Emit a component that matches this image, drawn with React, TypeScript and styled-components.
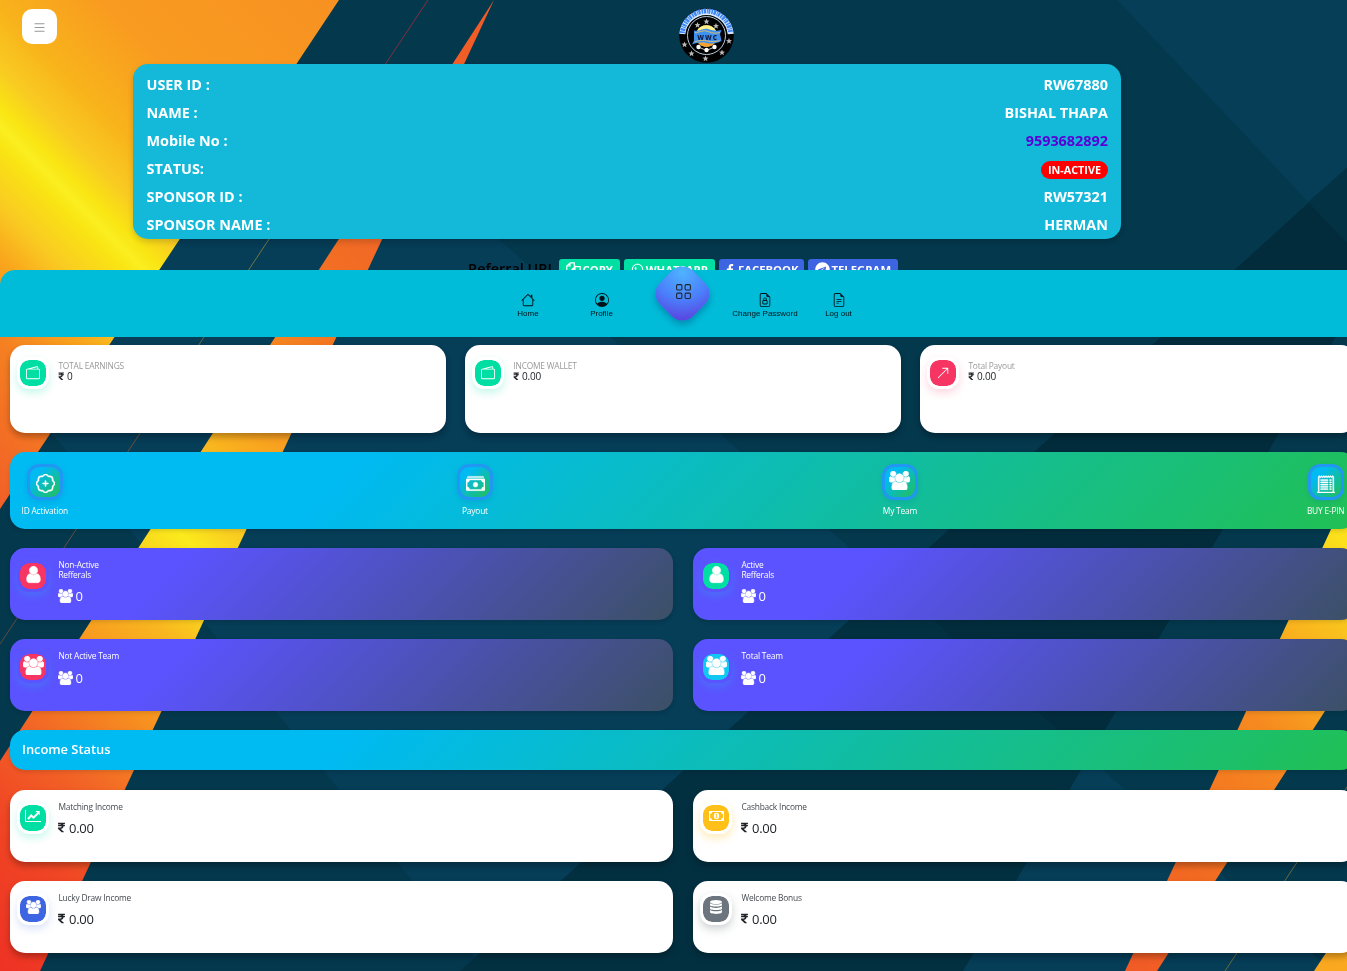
import React from "react";
import styled, { createGlobalStyle, css } from "styled-components";
import { BsList, BsPersonCircle, BsGrid, BsFileEarmarkLock, BsFileEarmarkText, BsWallet2, BsArrowUpRight, BsPatchPlus, BsReceiptCutoff } from "react-icons/bs";
import { FaWhatsapp, FaFacebookF, FaTelegram, FaRupeeSign } from "react-icons/fa";

const GlobalStyle = createGlobalStyle`
  * { box-sizing: border-box; }
  html { background: #04384d; }
  html, body { margin: 0; padding: 0; overflow: hidden; }
  body { font-family: "Open Sans", "Noto Sans", sans-serif; color: #212529; }
`;

/* ---------- drawings ---------- */

type IconProps = { size?: number; height?: number };

const UserIcon = ({ size = 16 }: IconProps) => (
  <svg width={size} height={size} viewBox="0 0 1792 1792" fill="currentColor" stroke="currentColor" strokeWidth="60">
    <path d="M1536 1399q0 109-62.5 187t-150.5 78h-854q-88 0-150.5-78t-62.5-187q0-85 8.5-160.5t31.5-152 58.5-131 94-89 134.5-34.5q131 128 313 128t313-128q76 0 134.5 34.5t94 89 58.5 131 31.5 152 8.5 160.5zm-256-887q0 159-112.5 271.5t-271.5 112.5-271.5-112.5-112.5-271.5 112.5-271.5 271.5-112.5 271.5 112.5 112.5 271.5z" />
  </svg>
);

const UsersIcon = ({ size = 15 }: IconProps) => (
  <svg width={size} height={(size * 1792) / 1920} viewBox="64 0 1920 1792" fill="currentColor" stroke="currentColor" strokeWidth="50">
    <path d="M657 896q-162 5-265 128h-134q-82 0-138-40.5t-56-118.5q0-353 124-353 6 0 43.5 21t97.5 42.5 119 21.5q67 0 133-23-5 37-5 66 0 159 81 256zm1071 637q0 120-73 189.5t-194 69.5h-874q-121 0-194-69.5t-73-189.5q0-53 3.5-103.5t14-109 26.5-108.5 43-97.5 62-81 85.5-53.5 111.5-20q10 0 43 21.5t73 48 107 48 135 21.5 135-21.5 107-48 73-48 43-21.5q61 0 111.5 20t85.5 53.5 62 81 43 97.5 26.5 108.5 14 109 3.5 103.5zm-1024-1277q0 106-75 181t-181 75-181-75-75-181 75-181 181-75 181 75 75 181zm704 384q0 159-112.5 271.5t-271.5 112.5-271.5-112.5-112.5-271.5 112.5-271.5 271.5-112.5 271.5 112.5 112.5 271.5zm576 225q0 78-56 118.5t-138 40.5h-134q-103-123-265-128 81-97 81-256 0-29-5-66 66 23 133 23 59 0 119-21.5t97.5-42.5 43.5-21q124 0 124 353zm-128-609q0 106-75 181t-181 75-181-75-75-181 75-181 181-75 181 75 75 181z" />
  </svg>
);

const HomeIcon = () => (
  <svg width="14" height="14" viewBox="0 0 16 16" fill="currentColor">
    <path d="M2 13.5V7h1v6.5a.5.5 0 0 0 .5.5h9a.5.5 0 0 0 .5-.5V7h1v6.5a1.5 1.5 0 0 1-1.5 1.5h-9A1.5 1.5 0 0 1 2 13.5zm11-11V6l-2-2V2.5a.5.5 0 0 1 .5-.5h1a.5.5 0 0 1 .5.5z" />
    <path d="M7.293 1.5a1 1 0 0 1 1.414 0l6.647 6.646a.5.5 0 0 1-.708.708L8 2.207 1.354 8.854a.5.5 0 1 1-.708-.708L7.293 1.5z" />
  </svg>
);

const CashIcon = () => (
  <svg width="19" height="19" viewBox="0 0 16 16" fill="currentColor" stroke="currentColor" strokeWidth=".35">
    <path d="M14 3H1a1 1 0 0 1 1-1h12a1 1 0 0 1 1 1h-1z" />
    <path fillRule="evenodd" d="M15 5H1v8h14V5zM1 4a1 1 0 0 0-1 1v8a1 1 0 0 0 1 1h14a1 1 0 0 0 1-1V5a1 1 0 0 0-1-1H1z" />
    <path d="M13 5a2 2 0 0 0 2 2V5h-2zM3 5a2 2 0 0 1-2 2V5h2zm10 8a2 2 0 0 1 2-2v2h-2zM3 13a2 2 0 0 0-2-2v2h2zm7-4a2 2 0 1 1-4 0 2 2 0 0 1 4 0z" />
  </svg>
);

const CopyIcon = () => (
  <svg width="15" height="15" viewBox="0 0 15 15" fill="none" stroke="currentColor" strokeWidth="1.2">
    <path d="M4 .8h4.3v3.8M4 .8.8 4v6.6h4.8M4 .8V4H.8M9 4.6h5.2v9.6H5.8V7.8L9 4.6v3.2H5.8" />
  </svg>
);

const ChartIcon = () => (
  <svg width="16" height="12" viewBox="0 0 16 12" fill="none" stroke="currentColor">
    <path d="M.5 0v11.5H16" strokeWidth="1" />
    <path d="M3 9l3.2-3.5 2.3 2.2L13 3.2" strokeWidth="2" />
    <path d="M10.5 1h4.2v4.2z" fill="currentColor" stroke="none" />
  </svg>
);

const MoneyIcon = () => (
  <svg width="15" height="10" viewBox="0 0 15 10" fill="currentColor">
    <path fillRule="evenodd" d="M0 0h15v10H0zM3 1.1A2 2 0 0 1 1.1 3v4A2 2 0 0 1 3 8.9h9A2 2 0 0 1 13.9 7V3A2 2 0 0 1 12 1.1z" />
    <ellipse cx="7.5" cy="5" rx="2.7" ry="3.3" />
    <path d="M6.5 3.600l1-.7v3.600M6.400 6.700h2.200" fill="none" stroke="#ffc01a" strokeWidth=".8" />
  </svg>
);

const DatabaseIcon = () => (
  <svg width="12" height="14" viewBox="0 0 12 14" fill="currentColor">
    <ellipse cx="6" cy="2" rx="6" ry="2" />
    <path d="M0 3.300c2 1.700 10 1.700 12 0v1.800c0 2-12 2-12 0zM0 6.600c2 1.700 10 1.700 12 0v1.800c0 2-12 2-12 0zM0 9.900c2 1.700 10 1.700 12 0V12c0 2.500-12 2.500-12 0z" />
  </svg>
);

const stars: [number, number][] = [
  [18.5, 17], [27.5, 13.5], [37, 18], [5.5, 36.5], [12.5, 45.5], [26.5, 50.5], [43, 44.5], [50, 33],
];

const Logo = () => (
  <svg width="55" height="55" viewBox="0 0 55 55">
    <circle cx="27.500" cy="27.500" r="27.300" fill="#000" />
    <path d="M3.300 26A24.300 24.300 0 0 1 51.700 26" fill="none" stroke="#dcecff" strokeWidth="6" />
    <path d="M3.300 25A24.300 24.300 0 0 1 51.700 25" fill="none" stroke="#3c87f5" strokeWidth="5" strokeDasharray="1.6 .7 2.500 .8 1 .6 2 1" />
    <circle cx="27.500" cy="27.500" r="19" fill="#000" stroke="#bcd" strokeWidth="1" />
    <circle cx="27.500" cy="28" r="10.800" fill="#fbc45c" />
    <path d="M18 23a10.800 10.800 0 0 1 19 0z" fill="#fff08c" />
    <path d="M19 34.500a10.800 10.800 0 0 0 17 0z" fill="#f5a030" />
    {stars.map(([x, y]) => (
      <path key={`${x}-${y}`} transform={`translate(${x} ${y})`} fill="#b9b9b9" d="M0-3l.8 2.100 2.200.1-1.700 1.400.6 2.200L0 1.600l-1.900 1.200.6-2.200L-3-.8l2.200-.1z" />
    ))}
    <path d="M15 22.500c5 1.500 9-2.500 14-1.500 5 1.500 8 2.500 13.500 1l-1.500 4 1.500 7c-6 3-11 3-15 2-5-1-9-.5-14.500 1.500l2-4z" fill="#3f91ee" />
    <path d="M16 24.500c5 0 8-3 13-1s8 2 12 1M15.500 34c5-2 9-2 13-1s8 1 12-.5" stroke="#fbc45c" strokeWidth=".8" fill="none" />
    <text x="28.500" y="31.500" textAnchor="middle" fontFamily="Open Sans, sans-serif" fontWeight="800" fontSize="6.500" letterSpacing="1" fill="#111d46">WWC</text>
    <path d="M19.500 39L27.500 42.500 35.500 39" stroke="#fff" strokeWidth=".8" fill="none" />
    <circle cx="19.500" cy="39" r="2.200" fill="#fff" />
    <circle cx="27.500" cy="42" r="2.200" fill="#fff" />
    <circle cx="35.500" cy="39" r="2.200" fill="#fff" />
  </svg>
);

/* Diagonal colour ramps run along x - y. */
const Wallpaper = () => (
  <BackdropSvg viewBox="0 0 1347 971" preserveAspectRatio="none">
    <defs>
      <linearGradient id="bandA" gradientUnits="userSpaceOnUse" x1="-254" y1="255" x2="170" y2="-169">
        <stop offset="0" stopColor="#f15f27" />
        <stop offset=".2" stopColor="#f58021" />
        <stop offset=".3" stopColor="#f9a81c" />
        <stop offset=".36" stopColor="#f9cb22" />
        <stop offset=".43" stopColor="#f9e513" />
        <stop offset=".452" stopColor="#fbee21" />
        <stop offset=".475" stopColor="#f9e513" />
        <stop offset=".52" stopColor="#f9cb22" />
        <stop offset=".59" stopColor="#f8b31b" />
        <stop offset=".72" stopColor="#f99b20" />
        <stop offset="1" stopColor="#f79122" />
      </linearGradient>
      <linearGradient id="bandB" gradientUnits="userSpaceOnUse" x1="-480" y1="480" x2="247" y2="-247">
        <stop offset="0" stopColor="#ee3324" />
        <stop offset=".1" stopColor="#f04624" />
        <stop offset=".18" stopColor="#f26426" />
        <stop offset=".27" stopColor="#f79420" />
        <stop offset=".34" stopColor="#f9b81f" />
        <stop offset=".38" stopColor="#f9d61d" />
        <stop offset=".417" stopColor="#fbea1c" />
        <stop offset=".45" stopColor="#f9cf20" />
        <stop offset=".52" stopColor="#f9ab1e" />
        <stop offset=".58" stopColor="#f79322" />
        <stop offset=".65" stopColor="#f47621" />
        <stop offset=".76" stopColor="#f16726" />
        <stop offset="1" stopColor="#f15a27" />
      </linearGradient>
      <linearGradient id="bandC" gradientUnits="userSpaceOnUse" x1="77" y1="-77" x2="400" y2="-400">
        <stop offset="0" stopColor="#f15a26" />
        <stop offset=".25" stopColor="#f26922" />
        <stop offset=".6" stopColor="#f68b20" />
        <stop offset=".8" stopColor="#f9b51e" />
        <stop offset="1" stopColor="#fbe01b" />
      </linearGradient>
      <linearGradient id="hair" gradientUnits="userSpaceOnUse" x1="428" y1="0" x2="0" y2="644">
        <stop offset="0" stopColor="#8b2b3a" />
        <stop offset=".12" stopColor="#6d3540" />
        <stop offset=".4" stopColor="#76783a" />
        <stop offset=".65" stopColor="#6b4f40" />
        <stop offset="1" stopColor="#64483f" />
      </linearGradient>
    </defs>
    <rect width="1347" height="971" fill="#04384d" />
    <path d="M227 0L1332 971H485L0 369V0z" fill="#063d57" />
    <path d="M227 0H1117L1347 243V971H1332z" fill="#04384d" />
    <path d="M1117 0H1347V243z" fill="#063d57" />
    <path d="M1347 168V317L963 971H460L662 790z" fill="#033041" />
    <path d="M1347 168V317L1089 757 891 583z" fill="#022c3c" />
    <path d="M1308 202L1347 168V243z" fill="#023243" />
    <path d="M0 0H339L0 509z" fill="url(#bandA)" />
    <path d="M494 0L0 761V971H40z" fill="url(#bandB)" />
    <path d="M1347 495L1125 971H1157L1347 677z" fill="url(#bandC)" />
    <path d="M1347 921V971H1314z" fill="#f9a81f" />
    <path d="M428 0L0 644" stroke="url(#hair)" strokeWidth="1" />
    <path d="M1347 787L1225 971" stroke="#6c6b3c" strokeWidth="1" />
  </BackdropSvg>
);

/* ---------- layout ---------- */

const BackdropSvg = styled.svg`
  position: fixed;
  inset: 0;
  width: 100%;
  height: 100%;
  z-index: -1;
`;

const Page = styled.div`
  width: 1366px;
  height: 971px;
  overflow: hidden;
`;

const Header = styled.header`
  display: grid;
  grid-template-columns: 657px 98px;
  padding: 9px 0 0 22px;
  height: 64px;

  > svg {
    margin-top: -1px;
  }
`;

const MenuButton = styled.button`
  display: grid;
  place-items: center;
  width: 35px;
  height: 35px;
  padding: 2px 0 0;
  border: 0;
  border-radius: 10px;
  background: #fff;
  color: #999;
`;

const UserCard = styled.section`
  width: 988px;
  height: 175px;
  margin-left: 133px;
  padding: 6px 13px 0 13.5px;
  border-radius: 15px;
  background: #14b8d8;
  box-shadow: 0 3px 6px rgba(0, 0, 0, 0.16);
`;

const UserRow = styled.div`
  display: flex;
  justify-content: space-between;
  align-items: center;
  height: 28px;
  color: #fff;
  font-size: 14.4px;
  font-weight: 700;
`;

const Phone = styled.span`
  color: #5a00d6;
`;

const StatusPill = styled.span`
  margin-top: 4px;
  height: 18px;
  padding: 0 7px;
  border-radius: 9px;
  background: #f00;
  font-size: 10.8px;
  line-height: 18px;
  letter-spacing: 0;
`;

const ReferralRow = styled.div`
  display: flex;
  gap: 4px;
  height: 31px;
  padding: 20px 0 0 468px;
  overflow: hidden;
`;

const ReferralLabel = styled.span`
  width: 87px;
  color: #000;
  font-size: 14.4px;
  font-weight: 600;
  line-height: 19px;
  white-space: nowrap;
`;

const ShareButton = styled.a<{ $color: string; $width: number }>`
  display: flex;
  justify-content: center;
  align-items: center;
  gap: 1.5px;
  width: ${(p) => p.$width}px;
  height: 21px;
  border-radius: 3px;
  background: ${(p) => p.$color};
  color: #fff;
  font-size: 11.3px;
  font-weight: 700;
`;

const NavBar = styled.nav`
  display: flex;
  height: 67px;
  padding-left: 491px;
  border-radius: 15px 15px 0 0;
  background: #00bcd8;
`;

const NavItem = styled.a<{ $width: number }>`
  display: flex;
  flex-direction: column;
  align-items: center;
  gap: 1px;
  width: ${(p) => p.$width}px;
  padding-top: 23px;
  color: #001219;
  font: 8px/11px "Liberation Sans", Arial, sans-serif;
  white-space: nowrap;
`;

const CenterButton = styled.div`
  display: grid;
  place-items: center;
  width: 47px;
  height: 47px;
  margin: 0 26px 0 21px;
  border-radius: 15px;
  background: radial-gradient(circle at 18% 18%, #4fb3ff 0%, #4a80fb 50%, #5a45e0 88%, #6037d8 100%);
  box-shadow: 3px 3px 6px rgba(0, 40, 100, 0.3);
  transform: rotate(45deg);
  position: relative;

  svg {
    transform: rotate(-45deg) translate(1px, -2px);
  }
`;

const Content = styled.main`
  display: flex;
  flex-direction: column;
  width: 1366px;
  padding: 8px 10px 0;
`;

const Row = styled.div<{ $columns: number; $gap: number }>`
  display: grid;
  grid-template-columns: repeat(${(p) => p.$columns}, 1fr);
  gap: ${(p) => p.$gap}px;
  margin-bottom: 19px;
`;

const oceanGradient = "linear-gradient(135deg, #00baf2 25%, #21c054 100%)";

const Card = styled.article<{ $height: number; $violet?: boolean }>`
  display: flex;
  gap: 9.4px;
  height: ${(p) => p.$height}px;
  padding: 12px 7px 0;
  border-radius: 15px;
  background: #fff;
  box-shadow: 0 4px 6px rgba(0, 0, 0, 0.28);
  ${(p) =>
    p.$violet &&
    css`
      color: #fff;
      background: linear-gradient(135deg, #5b53ff 25%, #3c5065 100%);
      box-shadow: 0 2px 4px rgba(0, 0, 0, 0.12);
    `}
`;

const Badge = styled.div<{ $color: string; $glow: string; $edge?: string; $shift?: number }>`
  display: grid;
  place-items: center;
  width: 32px;
  height: 32px;
  padding-bottom: ${(p) => p.$shift ?? 0}px;
  border: 3px solid ${(p) => p.$edge ?? "#fff"};
  border-radius: 12px;
  background: ${(p) => p.$color};
  background-clip: padding-box;
  box-shadow: 0 4px 8px ${(p) => p.$glow};
  color: #fff;
`;

const CardText = styled.div<{ $top?: number }>`
  padding-top: ${(p) => p.$top ?? 0.4}px;
`;

const Label = styled.div<{ $tone?: string }>`
  color: ${(p) => p.$tone ?? "inherit"};
  font-size: 8.4px;
  letter-spacing: -0.2px;
  line-height: 9.6px;
  white-space: pre-line;
`;

const Amount = styled.div<{ $large?: boolean; $lift?: number }>`
  display: flex;
  align-items: center;
  gap: 2px;
  margin-top: ${(p) => (p.$large ? 7.6 : 0) - (p.$lift ?? 0)}px;
  font-size: ${(p) => (p.$large ? 13 : 10)}px;
  line-height: ${(p) => (p.$large ? 18 : 11)}px;
  letter-spacing: -0.2px;
`;

const Rupee = styled(FaRupeeSign)`
  margin: 0 0 0 -0.19em;
`;

const ActionBar = styled.section`
  display: flex;
  justify-content: space-between;
  height: 77px;
  margin-bottom: 19px;
  padding: 12px 11.5px 0 11.5px;
  border-radius: 15px;
  background: ${oceanGradient};
  box-shadow: 0 2px 4px rgba(0, 0, 0, 0.12);
`;

const Action = styled.a`
  display: flex;
  flex-direction: column;
  align-items: center;
  color: #fff;
  font-size: 8.4px;
  letter-spacing: -0.2px;
  line-height: 12px;
  white-space: nowrap;
`;

const ActionTile = styled.span<{ $lift?: boolean }>`
  display: grid;
  place-items: center;
  width: 36px;
  height: 36px;
  margin-bottom: 5px;
  padding: ${(p) => (p.$lift ? "0 0 3px" : "3px 0 0 1px")};
  border: 3px solid #2196f3;
  border-radius: 12px;
  background: linear-gradient(135deg, #00baf2 25%, #21c054 100%) padding-box;
  box-shadow: 0 2px 5px rgba(0, 80, 160, 0.15);
`;

const SectionTitle = styled.h2`
  height: 40px;
  margin: 0 0 20px;
  padding-left: 12px;
  border-radius: 15px;
  background: ${oceanGradient};
  box-shadow: 0 2px 4px rgba(0, 0, 0, 0.12);
  color: #fff;
  font-size: 13px;
  font-weight: 600;
  line-height: 39px;
  letter-spacing: -0.08px;
`;

/* ---------- data ---------- */

const MINT = "#00dfa3";
const ROSE = "#f73563";
const BLUE = "#3d64e1";
const mintGlow = "rgba(0, 223, 163, .22)";
const roseGlow = "rgba(247, 53, 99, .2)";
const violetGlow = "rgba(50, 160, 235, .35)";

const wallets = [
  { label: "TOTAL EARNINGS", value: "0", color: MINT, glow: mintGlow, icon: <BsWallet2 size={14} /> },
  { label: "INCOME WALLET", value: "0.00", color: MINT, glow: mintGlow, icon: <BsWallet2 size={14} /> },
  { label: "Total Payout", value: "0.00", color: ROSE, glow: roseGlow, icon: <BsArrowUpRight size={14} /> },
];

const teams = [
  [
    { label: "Non-Active\nRefferals", color: ROSE, icon: <UserIcon size={19} /> },
    { label: "Active\nRefferals", color: MINT, icon: <UserIcon size={19} /> },
  ],
  [
    { label: "Not Active Team", color: ROSE, icon: <UsersIcon size={21} /> },
    { label: "Total Team", color: "#12c8f2", icon: <UsersIcon size={21} /> },
  ],
];

const incomes = [
  [
    { label: "Matching Income", color: MINT, glow: mintGlow, icon: <ChartIcon /> },
    { label: "Cashback Income", color: "#ffc01a", glow: "rgba(255, 192, 26, .3)", icon: <MoneyIcon /> },
  ],
  [
    { label: "Lucky Draw Income", color: BLUE, glow: "rgba(61, 100, 225, .18)", icon: <UsersIcon size={15} /> },
    { label: "Welcome Bonus", color: "#6c757d", glow: "rgba(60, 70, 80, .25)", icon: <DatabaseIcon /> },
  ],
];

export default function App() {
  return (
    <>
      <GlobalStyle />
      <Wallpaper />
      <Page>
        <Header>
          <MenuButton><BsList size={15} /></MenuButton>
          <Logo />
        </Header>
        <UserCard>
          <UserRow><span>USER ID :</span><span>RW67880</span></UserRow>
          <UserRow><span>NAME :</span><span>BISHAL THAPA</span></UserRow>
          <UserRow><span>Mobile No :</span><Phone>9593682892</Phone></UserRow>
          <UserRow><span>STATUS:</span><StatusPill>IN-ACTIVE</StatusPill></UserRow>
          <UserRow><span>SPONSOR ID :</span><span>RW57321</span></UserRow>
          <UserRow><span>SPONSOR NAME :</span><span>HERMAN</span></UserRow>
        </UserCard>
        <ReferralRow>
          <ReferralLabel>Referral URL</ReferralLabel>
          <ShareButton $color={MINT} $width={61}><CopyIcon />COPY</ShareButton>
          <ShareButton $color={MINT} $width={91}><FaWhatsapp size={13} />WHATSAPP</ShareButton>
          <ShareButton $color={BLUE} $width={85}><FaFacebookF size={12} />FACEBOOK</ShareButton>
          <ShareButton $color={BLUE} $width={90}><FaTelegram size={15} />TELEGRAM</ShareButton>
        </ReferralRow>
        <NavBar>
          <NavItem $width={74}><HomeIcon />Home</NavItem>
          <NavItem $width={73}><BsPersonCircle size={14} />Profile</NavItem>
          <CenterButton><BsGrid size={17} /></CenterButton>
          <NavItem $width={66}><BsFileEarmarkLock size={14} />Change Password</NavItem>
          <NavItem $width={81}><BsFileEarmarkText size={14} />Log out</NavItem>
        </NavBar>
        <Content>
          <Row $columns={3} $gap={19}>
            {wallets.map((w) => (
              <Card key={w.label} $height={88}>
                <Badge $color={w.color} $glow={w.glow} $shift={-2}>{w.icon}</Badge>
                <CardText $top={4.4}>
                  <Label $tone="#999">{w.label}</Label>
                  <Amount><Rupee size={8.5} />{w.value}</Amount>
                </CardText>
              </Card>
            ))}
          </Row>
          <ActionBar>
            <Action><ActionTile><BsPatchPlus size={19} strokeWidth={0.4} /></ActionTile>ID Activation</Action>
            <Action><ActionTile><CashIcon /></ActionTile>Payout</Action>
            <Action><ActionTile $lift><UsersIcon size={21} /></ActionTile>My Team</Action>
            <Action><ActionTile><BsReceiptCutoff size={18} strokeWidth={0.3} /></ActionTile>BUY E-PIN</Action>
          </ActionBar>
          {teams.map((row, i) => (
            <Row key={i} $columns={2} $gap={20}>
              {row.map((t) => (
                <Card key={t.label} $height={72} $violet>
                  <Badge $color={t.color} $glow={violetGlow} $edge="#5b53ff" $shift={3}>{t.icon}</Badge>
                  <CardText>
                    <Label>{t.label}</Label>
                    <Amount $large><UsersIcon size={15} />0</Amount>
                  </CardText>
                </Card>
              ))}
            </Row>
          ))}
          <SectionTitle>Income Status</SectionTitle>
          {incomes.map((row, i) => (
            <Row key={i} $columns={2} $gap={20}>
              {row.map((t) => (
                <Card key={t.label} $height={72}>
                  <Badge $color={t.color} $glow={t.glow} $shift={4}>{t.icon}</Badge>
                  <CardText>
                    <Label $tone="#444a50">{t.label}</Label>
                    <Amount $large $lift={1}><Rupee size={11} />0.00</Amount>
                  </CardText>
                </Card>
              ))}
            </Row>
          ))}
        </Content>
      </Page>
    </>
  );
}
